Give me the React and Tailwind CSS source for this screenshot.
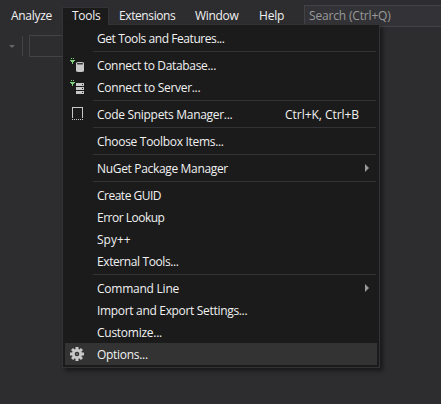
import React from 'react';

function Plug() {
  return (
    <g fill="#7fd17f" shapeRendering="crispEdges">
      <rect x="2" y="1" width="1" height="1" />
      <rect x="4" y="1" width="1" height="1" />
      <rect x="1" y="3" width="5" height="1" />
      <rect x="2" y="4" width="3" height="1" />
      <rect x="3" y="5" width="1" height="2" />
    </g>
  );
}

function DatabaseIcon() {
  return (
    <svg width="16" height="16" viewBox="0 0 16 16">
      <Plug />
      <path d="M7 6C7 4.7 15 4.7 15 6V14C15 15.4 7 15.4 7 14Z" fill="#c8c8c8" />
      <rect x="8" y="6" width="6" height="1.4" rx=".6" fill="#3a3a3a" />
    </svg>
  );
}

function ServerIcon() {
  return (
    <svg width="16" height="16" viewBox="0 0 16 16" shapeRendering="crispEdges">
      <Plug />
      <path d="M7 4h8v3H7zM7 8h8v3H7zM7 12h8v3H7z" fill="#c8c8c8" />
      <path d="M13 5h1v1h-1zM13 9h1v1h-1zM13 13h1v1h-1z" fill="#222" />
    </svg>
  );
}

function SnippetIcon() {
  return (
    <svg width="16" height="16" viewBox="0 0 16 16" shapeRendering="crispEdges" fill="#c8c8c8">
      <path d="M3 1h11v11h-1V2H4v10H3z" />
      <path d="M3 13h1v1H3zM5 13h1v1H5zM7 13h1v1H7zM9 13h1v1H9zM11 13h1v1h-1zM13 13h1v1h-1z" />
    </svg>
  );
}

function GearIcon() {
  return (
    <svg width="16" height="16" viewBox="-8 -8 16 16">
      <g fill="#c8c8c8">
        <rect x="-1.5" y="-7" width="3" height="14" />
        <rect x="-7" y="-1.5" width="14" height="3" />
        <rect x="-1.5" y="-7" width="3" height="14" transform="rotate(45)" />
        <rect x="-1.5" y="-7" width="3" height="14" transform="rotate(-45)" />
      </g>
      <circle r="3.7" fill="#333334" stroke="#c8c8c8" strokeWidth="2.8" />
      <circle r="1" fill="#77777a" />
    </svg>
  );
}

function Item({ icon, label, tracking, shortcut, submenu, active }) {
  return (
    <div className={`flex h-[22px] items-center ${active ? 'bg-[#333334]' : ''}`}>
      <span className="ml-1 w-7 shrink-0">{icon}</span>
      <span className={`grow pt-[2px] ${tracking}`}>{label}</span>
      {shortcut && <span className="mr-[18px] pt-[2px] tracking-[-0.05px]">{shortcut}</span>}
      {submenu && (
        <svg className="mr-2" width="4" height="8" viewBox="0 0 4 8">
          <path d="M0 0L4 4L0 8Z" fill="#999" />
        </svg>
      )}
    </div>
  );
}

function Separator() {
  return <div className="mt-[2px] mr-px mb-[2px] ml-7 h-px bg-[#333337]" />;
}

export default function App() {
  return (
    <div className="relative h-[404px] w-[441px] overflow-hidden bg-[#2d2d30] font-['Open_Sans','Noto_Sans',sans-serif] text-[12px] leading-4 whitespace-nowrap text-[#f1f1f1]">
      <div className="flex h-[27px] items-start">
        <span className="mt-2 ml-[11px] w-[51px] tracking-[-0.3px]">Analyze</span>
        <span className="mt-[7px] h-[18px] w-[47px] border border-b-0 border-[#333337] bg-[#1b1b1c] pl-[9px] tracking-[-0.3px]">Tools</span>
        <span className="mt-2 ml-[10px] w-[76px] tracking-[-0.4px]">Extensions</span>
        <span className="mt-2 w-16 tracking-[-0.3px]">Window</span>
        <span className="mt-2 w-[45px] tracking-[-0.2px]">Help</span>
        <span className="mt-[5px] h-[22px] grow border border-r-0 border-[#434346] bg-[#333337] pt-[2px] pl-1 tracking-[-0.17px] text-[#999]">Search (Ctrl+Q)</span>
      </div>
      <div className="mt-2 flex h-[22px] items-center">
        <svg className="ml-[9px]" width="6" height="4" viewBox="0 0 6 4">
          <path d="M0 1H6L3 4Z" fill="#656568" />
        </svg>
        <span className="ml-[7px] h-5 w-px bg-[#434346]" />
        <span className="ml-[6px] h-[22px] w-20 border border-[#434346]" />
      </div>
      <div className="absolute top-[24px] left-[62px] h-[344px] w-[318px] border border-[#333337] bg-[#1b1b1c] p-[2px] shadow-[3px_3px_4px_rgba(0,0,0,0.45)]">
        <Item label="Get Tools and Features..." tracking="tracking-[-0.43px]" />
        <Separator />
        <Item icon={<DatabaseIcon />} label="Connect to Database..." tracking="tracking-[-0.33px]" />
        <Item icon={<ServerIcon />} label="Connect to Server..." tracking="tracking-[-0.3px]" />
        <Separator />
        <Item icon={<SnippetIcon />} label="Code Snippets Manager..." tracking="tracking-[-0.3px]" shortcut="Ctrl+K, Ctrl+B" />
        <Separator />
        <Item label="Choose Toolbox Items..." tracking="tracking-[-0.3px]" />
        <Separator />
        <Item label="NuGet Package Manager" tracking="tracking-[-0.33px]" submenu />
        <Separator />
        <Item label="Create GUID" tracking="tracking-[-0.5px]" />
        <Item label="Error Lookup" tracking="tracking-[-0.5px]" />
        <Item label="Spy++" tracking="tracking-[0px]" />
        <Item label="External Tools..." tracking="tracking-[-0.4px]" />
        <Separator />
        <Item label="Command Line" tracking="tracking-[-0.24px]" submenu />
        <Item label="Import and Export Settings..." tracking="tracking-[-0.32px]" />
        <Item label="Customize..." tracking="tracking-[-0.26px]" />
        <Item icon={<GearIcon />} label="Options..." tracking="tracking-[-0.3px]" active />
      </div>
      <div className="absolute top-[24px] left-[63px] h-px w-[45px] bg-[#1b1b1c]" />
    </div>
  );
}
